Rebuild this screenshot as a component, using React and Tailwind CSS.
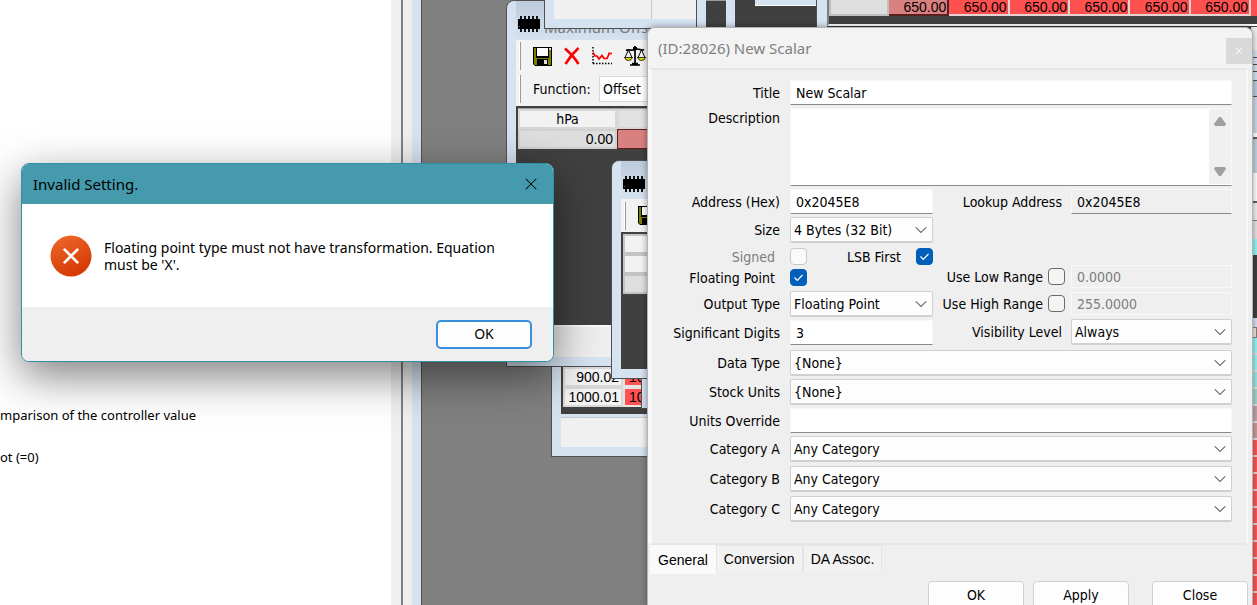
import React from 'react';
import clsx from 'clsx';
import { X, ChevronDown } from 'lucide-react';

const edgeSlices = [
  'h-[23px] bg-[#f0f0f0]',
  'h-[7px] bg-[#d5e2f0]',
  'h-[7px] border-t border-[#505050] bg-[#d5e2f0]',
  'h-[7px] border-t border-[#505050] bg-[#d5e2f0]',
  'h-[9px] border-t border-[#505050] bg-[#d5e2f0]',
  'h-[16px] border-t border-[#505050] bg-[#bccbdc]',
  'h-[37px] border-t border-[#505050] bg-[#cbd8e6]',
  'h-[4px] bg-white',
  'h-[36px] border-t-2 border-[#606060] bg-[#c3d0df]',
  'h-[28px] bg-white',
  'h-[19px] border-t-2 border-[#606060] bg-[#f0f0f0]',
  'h-[19px] border-t border-[#808080] bg-[#e4e4e4]',
  'h-[16px] bg-[#8ff8f8]',
  'h-[63px] bg-[#404040]',
  'h-[9px] bg-[#d5e2f0]',
  'h-[11px] border border-[#808080] bg-[#f3e4cf]',
  'h-[17px] border-b-2 border-[#e0e0e0] bg-[#8ff8f8]',
  'h-[17px] border-b-2 border-[#e0e0e0] bg-[#90f4f2]',
  'h-[17px] border-b-2 border-[#e0e0e0] bg-[#98e6e2]',
  'h-[17px] border-b-2 border-[#e0e0e0] bg-[#a5d3cf]',
  'h-[17px] border-b-2 border-[#e0e0e0] bg-[#c0a6a6]',
  'h-[17px] border-b-2 border-[#e0e0e0] bg-[#c99a9a]',
];

const redRows = [1, 2, 3, 4, 5, 6, 7, 8, 9, 10];
const readings = ['650.00', '650.00', '650.00', '650.00', '650.00', '650.00'];

function ChipIcon() {
  return (
    <svg width="22" height="16" viewBox="0 0 22 16" className="shrink-0" aria-hidden="true">
      <rect x="0" y="3" width="22" height="10" fill="#000" />
      {[2, 6, 10, 14, 18].map((x) => (
        <g key={x} fill="#111">
          <rect x={x} y="0" width="2" height="3" />
          <rect x={x} y="13" width="2" height="3" />
        </g>
      ))}
      <rect x="1" y="10" width="1" height="1" fill="#777" />
    </svg>
  );
}

function SaveIcon() {
  return (
    <svg width="19" height="19" viewBox="0 0 19 19" className="shrink-0" aria-hidden="true">
      <path d="M0 0h19v19H2l-2-2z" fill="#000" />
      <path d="M1 1h2v10h13V1h2v17H2l-1-1z" fill="#7d7d00" />
      <rect x="4" y="1" width="11" height="8" fill="#fff" />
      <rect x="16" y="1" width="2" height="2" fill="#ddd" />
      <rect x="4" y="12" width="11" height="6" fill="#000" />
      <rect x="11" y="13" width="3" height="4" fill="#ddd" />
    </svg>
  );
}

function DeleteIcon() {
  return (
    <svg width="16" height="18" viewBox="0 0 16 18" className="shrink-0" aria-hidden="true">
      <path d="M1 1.500C6 6 11 11 14.500 17M14.500 1C9 6 5 11 1.500 17" stroke="#f00" strokeWidth="2.600" fill="none" />
    </svg>
  );
}

function GraphIcon() {
  return (
    <svg width="20" height="18" viewBox="0 0 20 18" className="shrink-0" aria-hidden="true">
      <path d="M1 0v17M1 16.500h19" stroke="#000" strokeWidth="1.500" strokeDasharray="1.500 1.500" fill="none" />
      <path d="M1 5.500 3 9h2l2 3 3-3.500 2 3h3l2-4.500v-1.500M17 6.500h3" stroke="#f00" strokeWidth="1.700" fill="none" />
    </svg>
  );
}

function BalanceIcon() {
  return (
    <svg width="22" height="20" viewBox="0 0 22 20" className="shrink-0" aria-hidden="true">
      <path d="M11 0v18M6 19h10M8 17.500h6M2 4.500c3-2 5 1 9-1s6 2 9 0" stroke="#000" strokeWidth="1.700" fill="none" />
      <path d="M4.500 4 1 11.500M4.500 4 8 11.500M17.500 4 14 11.500M17.500 4 21 11.500" stroke="#000" fill="none" />
      <path d="M.5 11.500h8q-1 3-4 3t-4-3zM13.500 11.500h8q-1 3-4 3t-4-3z" fill="#e8e000" stroke="#000" strokeWidth=".8" />
      <rect x="9" y="1" width="4" height="3" fill="#000" />
    </svg>
  );
}

function Grip() {
  return <div className="h-7 w-[2px] shrink-0 border-r border-[#9a9a9a] bg-white" />;
}

function TextField({ id, className, ...props }) {
  return (
    <input
      id={id}
      type="text"
      className={clsx(
        'w-full min-w-0 border border-[#f8f8f8] px-[5px] text-sm',
        props.disabled
          ? 'h-[23px] bg-[#efefef] text-[#7d7d7d]'
          : 'h-[25px] border-b-[#8a8a8a]',
        className
      )}
      {...props}
    />
  );
}

function Dropdown({ id, value, className }) {
  return (
    <div className={clsx('relative w-full min-w-0', className)}>
      <select
        id={id}
        defaultValue={value}
        className="block h-[26px] w-full appearance-none rounded-[2px] border border-b-2 border-[#d0d0d0] bg-[#fdfdfd] px-[3px] text-sm text-black"
      >
        <option>{value}</option>
      </select>
      <ChevronDown size={20} strokeWidth={1.25} className="pointer-events-none absolute right-[2px] top-[3px] text-[#4c4c4c]" />
    </div>
  );
}

function CheckBox({ id, checked, disabled }) {
  return (
    <span className="relative block size-[17px] shrink-0">
      <input
        id={id}
        type="checkbox"
        defaultChecked={checked}
        disabled={disabled}
        className={clsx(
          'block size-[17px] appearance-none rounded-[4px] border',
          checked && 'border-[#005fb8] bg-[#005fb8]',
          !checked && disabled && 'border-[#c8c8c8] bg-[#fafafa]',
          !checked && !disabled && 'border-[#6a6a6a] bg-[#f4f4f4]'
        )}
      />
      {checked && (
        <svg viewBox="0 0 17 17" className="pointer-events-none absolute inset-0" aria-hidden="true">
          <path d="m4.500 8.500 2.800 2.800 5.200-5.300" stroke="#fff" strokeWidth="1.200" fill="none" />
        </svg>
      )}
    </span>
  );
}

function Row({ id, label, top, children }) {
  return (
    <div className={clsx('flex gap-[10px]', top ? 'items-start' : 'items-center')}>
      <label htmlFor={id} className="w-32 shrink-0 text-right whitespace-nowrap">
        {label}
      </label>
      {children}
    </div>
  );
}

function BackgroundWindows() {
  return (
    <>
      {/* bottom table window */}
      <div className="absolute left-[551px] top-[340px] flex h-[117px] w-[130px] flex-col border border-[#505050] bg-[#d5e2f0] pb-[9px] pl-[9px]">
        <div className="bg-[#404040] pb-[7px] pl-[2px] pt-[26px]">
          <table className="w-full table-fixed border-separate border-spacing-0 font-['Liberation_Sans'] text-sm leading-4">
            <tbody>
              <tr>
                <td className="w-[60px] border-2 border-[#d8d8d8] bg-[#f2f2f2] p-0 pr-[2px] text-right">900.02</td>
                <td className="border-2 border-[#e4e4e4] bg-[#ff5252] p-0 pl-1">10.00</td>
              </tr>
              <tr>
                <td className="border-2 border-[#d8d8d8] bg-[#f2f2f2] p-0 pr-[2px] text-right">1000.01</td>
                <td className="border-2 border-[#e4e4e4] bg-[#ff5252] p-0 pl-1">10.00</td>
              </tr>
            </tbody>
          </table>
        </div>
        <div className="mt-[3px] grow border-t border-[#c8c8c8] bg-[#f0f0f0]" />
      </div>
      <div className="absolute left-[641px] top-[370px] h-[39px] w-10 border border-[#505050] bg-[#d5e2f0]" />

      {/* offset table window */}
      <div className="absolute left-[506px] top-0 flex h-[367px] w-[180px] flex-col rounded-tl-lg border border-[#505050] bg-[#d5e2f0] pb-[9px] pl-[9px]">
        <div className="flex h-[39px] shrink-0 items-end gap-1 bg-linear-to-b from-[#bccbdc] to-[#d5e2f0] pb-2 pl-[2px]">
          <ChipIcon />
          <span className="text-[15px] leading-[10px] text-[#7a7a7a]">Maximum Offset</span>
        </div>
        <div className="flex h-8 shrink-0 items-center gap-3 bg-[#f2f2f2] pl-[3px]">
          <Grip />
          <SaveIcon />
          <DeleteIcon />
          <GraphIcon />
          <BalanceIcon />
        </div>
        <div className="flex h-[34px] shrink-0 items-center bg-[#f2f2f2] pl-[3px] font-['DejaVu_Sans_Condensed']">
          <Grip />
          <label htmlFor="function" className="ml-3 w-[66px] text-sm">Function:</label>
          <input id="function" defaultValue="Offset" className="h-[26px] w-20 border border-[#d8d8d8] bg-white px-[3px] text-sm" />
        </div>
        <div className="grow bg-[#404040] pl-[2px] pt-[2px]">
          <table className="w-full table-fixed border-separate border-spacing-0 border-t border-[#9a9a9a] font-['Liberation_Sans'] text-sm leading-4">
            <thead>
              <tr>
                <th className="h-[19px] w-[99px] border-2 border-[#d8d8d8] bg-[#f2f2f2] p-0 font-['DejaVu_Sans_Condensed'] font-normal">hPa</th>
                <th className="border-2 border-[#d8d8d8] bg-[#e2e2e2] p-0" />
              </tr>
            </thead>
            <tbody>
              <tr>
                <td className="h-[19px] border-2 border-[#d0d0d0] bg-[#dedede] p-0 pr-[2px] text-right">0.00</td>
                <td className="border border-[#5a2020] bg-[#d98080] p-0" />
              </tr>
            </tbody>
          </table>
        </div>
        <div className="h-8 shrink-0 border-t-2 border-[#fafafa] bg-[#eeeeee]" />
      </div>

      {/* small window in front of it */}
      <div className="absolute left-[611px] top-[160px] flex h-[219px] w-20 flex-col rounded-tl-lg border border-[#505050] bg-[#d5e2f0] pb-[9px] pl-[9px]">
        <div className="h-[38px] shrink-0 bg-linear-to-b from-[#bccbdc] to-[#d5e2f0] pl-[2px] pt-[15px]">
          <ChipIcon />
        </div>
        <div className="flex h-[33px] shrink-0 items-center gap-3 bg-[#f2f2f2] pl-[3px]">
          <Grip />
          <SaveIcon />
        </div>
        <div className="grow bg-[#404040] pl-[2px] pt-[2px]">
          <div className="h-5 border-2 border-[#c4c4c4] bg-[#f2f2f2]" />
          <div className="h-5 border-2 border-[#c4c4c4] bg-[#f2f2f2]" />
          <div className="h-5 border-2 border-[#c4c4c4] bg-[#dedede]" />
        </div>
      </div>

      {/* windows that run off the top edge */}
      <div className="absolute left-[697px] right-0 top-0 flex h-[30px] bg-[#404040]">
        <div className="w-[9px] shrink-0 bg-[#d5e2f0]" />
        <div className="w-5 shrink-0 border-t border-[#9a9a9a]" />
        <div className="w-[9px] shrink-0 bg-[#d5e2f0]" />
        <div className="w-5 shrink-0" />
        <div className="h-[6px] w-[61px] shrink-0 border-b border-white bg-[#d5e2f0]" />
        <div className="w-[11px] shrink-0 border-l border-[#505050] bg-[#d5e2f0]" />
        <div className="h-[26px] min-w-0 grow overflow-hidden border-b-2 border-l-2 border-b-white border-l-[#808080]">
          <table className="h-4 w-[440px] table-fixed border-separate border-spacing-0 font-['Liberation_Sans'] text-sm leading-[12px]">
            <tbody>
              <tr>
                <td className="w-[60px] border-2 border-t-0 border-[#c0c0c0] bg-[#dedede] p-0" />
                {readings.map((value, idx) => (
                  <td
                    key={idx}
                    className={clsx(
                      'h-4 border-b-2 border-r-2 p-0 pr-px text-right',
                      idx === 0 ? 'border-[#5a2020] bg-[#d98080]' : 'border-[#e8d0d0] bg-[#ff5050]'
                    )}
                  >
                    {value}
                  </td>
                ))}
                <td className="w-[18px] bg-[#ff5050] p-0" />
              </tr>
            </tbody>
          </table>
        </div>
      </div>
      <div className="absolute left-[544px] top-0 flex h-[29px] w-[153px] border-x border-b border-[#505050] bg-[#d5e2f0] pb-[9px] pl-[9px]">
        <div className="w-[98px] border-r border-[#c8c8c8] bg-[#f0f0f0]" />
        <div className="grow bg-[#f0f0f0]" />
      </div>

      <div className="absolute right-0 top-[27px] bottom-0 flex w-[6px] flex-col overflow-hidden">
        {edgeSlices.map((slice, idx) => (
          <div key={idx} className={clsx('shrink-0', slice)} />
        ))}
        {redRows.map((n) => (
          <div key={n} className="h-[17px] shrink-0 border-b-2 border-[#e8d0d0] bg-[#ff5555]" />
        ))}
      </div>
    </>
  );
}

function ScalarWindow() {
  return (
    <section className="absolute bottom-0 left-[647px] right-1 top-[27px] flex flex-col overflow-hidden rounded-t-lg border border-b-0 border-[#b4b4b4] bg-[#efefef] shadow-[0_0_6px_rgba(0,0,0,0.4)]">
      <header className="flex h-10 shrink-0 items-center justify-between bg-[#f3f3f3] pl-[10px]">
        <h2 className="text-[15px] text-[#7f7f7f]">(ID:28026) New Scalar</h2>
        <button type="button" aria-label="Close window" className="mt-[6px] flex h-[26px] w-[26px] items-center justify-center bg-[#d9d9d9] text-white">
          <X size={12} strokeWidth={2} />
        </button>
      </header>

      <form className="mr-1 flex h-[477px] shrink-0 flex-col gap-[3px] border-2 border-l-4 border-[#f8f8f8] border-b-[#e6e6e6] border-t-[#e6e6e6] pr-[14px] pt-[10px] font-['DejaVu_Sans_Condensed'] text-sm text-black">
        <Row id="title" label="Title">
          <TextField id="title" defaultValue="New Scalar" className="bg-white" />
        </Row>
        <Row id="description" label="Description" top>
          <div className="relative min-w-0 grow">
            <textarea id="description" className="block h-[78px] w-full resize-none border border-[#f8f8f8] border-b-[#8a8a8a] bg-white" />
            <div className="absolute bottom-[2px] right-px top-px flex w-[22px] flex-col items-center justify-between bg-[#f0f0f0] py-2">
              <svg width="12" height="9" viewBox="0 0 12 9" aria-hidden="true"><path d="M5 0h2l5 7-1 2H1L0 7z" fill="#a0a0a0" /></svg>
              <svg width="12" height="9" viewBox="0 0 12 9" aria-hidden="true"><path d="M5 9h2l5-7-1-2H1L0 2z" fill="#a0a0a0" /></svg>
            </div>
          </div>
        </Row>

        <div className="flex pb-[2px]">
          <div className="flex w-[281px] shrink-0 flex-col gap-[3px]">
            <Row id="address" label="Address (Hex)">
              <TextField id="address" defaultValue="0x2045E8" className="bg-white" />
            </Row>
            <Row id="size" label="Size">
              <Dropdown id="size" value="4 Bytes (32 Bit)" />
            </Row>
            <div>
              <div className="flex h-[21px] items-center">
                <label htmlFor="signed" className="w-[123px] text-right text-[#7d7d7d]">Signed</label>
                <span className="ml-[15px]"><CheckBox id="signed" disabled /></span>
                <label htmlFor="lsb" className="ml-auto mr-[15px] whitespace-nowrap">LSB First</label>
                <CheckBox id="lsb" checked />
              </div>
              <div className="flex h-[21px] items-center">
                <label htmlFor="floating" className="w-[123px] text-right">Floating Point</label>
                <span className="ml-[15px]"><CheckBox id="floating" checked /></span>
              </div>
            </div>
            <Row id="output" label="Output Type">
              <Dropdown id="output" value="Floating Point" />
            </Row>
            <Row id="digits" label="Significant Digits">
              <TextField id="digits" defaultValue="3" className="bg-white" />
            </Row>
          </div>

          <div className="flex min-w-0 grow flex-col justify-between">
            <div className="flex items-center gap-[9px]">
              <label htmlFor="lookup" className="w-[129px] shrink-0 text-right">Lookup Address</label>
              <TextField id="lookup" defaultValue="0x2045E8" readOnly className="bg-[#efefef]" />
            </div>
            <div className="flex flex-col gap-1">
              <div className="flex items-center">
                <label htmlFor="useLow" className="w-[110px] shrink-0 text-right whitespace-nowrap">Use Low Range</label>
                <span className="ml-[5px] mr-[6px]"><CheckBox id="useLow" /></span>
                <TextField id="low" aria-label="Low range" defaultValue="0.0000" disabled />
              </div>
              <div className="flex items-center">
                <label htmlFor="useHigh" className="w-[110px] shrink-0 text-right whitespace-nowrap">Use High Range</label>
                <span className="ml-[5px] mr-[6px]"><CheckBox id="useHigh" /></span>
                <TextField id="high" aria-label="High range" defaultValue="255.0000" disabled />
              </div>
              <div className="flex items-center gap-[9px]">
                <label htmlFor="visibility" className="w-[129px] shrink-0 text-right">Visibility Level</label>
                <Dropdown id="visibility" value="Always" />
              </div>
            </div>
          </div>
        </div>

        <Row id="dataType" label="Data Type">
          <Dropdown id="dataType" value="{None}" />
        </Row>
        <Row id="stockUnits" label="Stock Units">
          <Dropdown id="stockUnits" value="{None}" />
        </Row>
        <Row id="units" label="Units Override">
          <TextField id="units" className="bg-white" />
        </Row>
        <div className="flex flex-col gap-1">
          {['A', 'B', 'C'].map((letter) => (
            <Row key={letter} id={letter} label={`Category ${letter}`}>
              <Dropdown id={letter} value="Any Category" />
            </Row>
          ))}
        </div>
      </form>

      <nav className="flex shrink-0 items-start pl-[2px] font-['Liberation_Sans'] text-sm text-black">
        <button type="button" className="h-[29px] bg-[#fafafa] px-2">General</button>
        <button type="button" className="h-[27px] border border-b-0 border-[#e4e4e4] bg-[#f2f2f2] px-[7px]">Conversion</button>
        <button type="button" className="h-[27px] border border-b-0 border-[#e4e4e4] bg-[#f2f2f2] px-[7px]">DA Assoc.</button>
      </nav>
      <footer className="mt-[7px] flex shrink-0 justify-end gap-[9px] pr-1 font-['DejaVu_Sans_Condensed'] text-sm text-black">
        <button type="button" className="h-7 w-24 rounded border border-[#d0d0d0] bg-[#fdfdfd]">OK</button>
        <button type="button" className="h-7 w-24 rounded border border-[#d0d0d0] bg-[#fdfdfd]">Apply</button>
        <button type="button" className="ml-[14px] h-7 w-24 rounded border border-[#d0d0d0] bg-[#fdfdfd]">Close</button>
      </footer>
    </section>
  );
}

function ErrorDialog() {
  return (
    <div
      role="alertdialog"
      aria-labelledby="error-title"
      className="absolute left-[21px] top-[163px] w-[533px] overflow-hidden rounded-lg border border-[#2f91a3] bg-white text-black shadow-[0_14px_44px_rgba(0,0,0,0.5)]"
    >
      <header className="flex h-10 items-center justify-between bg-[#459bad] pl-[11px] pr-3">
        <h1 id="error-title" className="text-[15px]">Invalid Setting.</h1>
        <button type="button" aria-label="Close">
          <X size={20} strokeWidth={1.25} />
        </button>
      </header>
      <div className="flex h-[103px] items-center gap-3 pl-7 pr-8">
        <svg width="42" height="42" viewBox="0 0 43 43" className="shrink-0" aria-hidden="true">
          <defs>
            <linearGradient id="errorFill" x1="0" y1="0" x2="0.4" y2="1">
              <stop offset="0" stopColor="#ee6a2c" />
              <stop offset="1" stopColor="#d63a05" />
            </linearGradient>
          </defs>
          <circle cx="21.500" cy="21.500" r="21" fill="url(#errorFill)" />
          <path d="m15 15 13 13m0-13-13 13" stroke="#fff" strokeWidth="2.800" strokeLinecap="round" />
        </svg>
        <p className="text-sm leading-[17px]">
          Floating point type must not have transformation. Equation must be &#39;X&#39;.
        </p>
      </div>
      <footer className="flex h-[54px] items-center justify-end bg-[#efefef] pr-[21px]">
        <button type="button" className="h-[29px] w-24 rounded-[5px] border-2 border-[#3a8fdc] bg-[#fdfdfd] text-sm">OK</button>
      </footer>
    </div>
  );
}

export default function App() {
  return (
    <main className="relative flex h-screen w-full overflow-hidden bg-[#808080] font-['Noto_Sans',sans-serif] text-black">
      <aside className="flex w-[422px] shrink-0 border-r border-[#505050] bg-white">
        <div className="grow pt-[405px] text-[13px] leading-5">
          <p className="whitespace-nowrap">mparison of the controller value</p>
          <p className="mt-[22px] whitespace-nowrap">ot (=0)</p>
        </div>
        <div className="w-[10px] bg-[#efefef]" />
        <div className="w-[2px] bg-[#808080]" />
        <div className="w-[9px] bg-[#efefef]" />
        <div className="w-[9px] bg-[#d5e2f0]" />
      </aside>
      <BackgroundWindows />
      <ScalarWindow />
      <ErrorDialog />
    </main>
  );
}
